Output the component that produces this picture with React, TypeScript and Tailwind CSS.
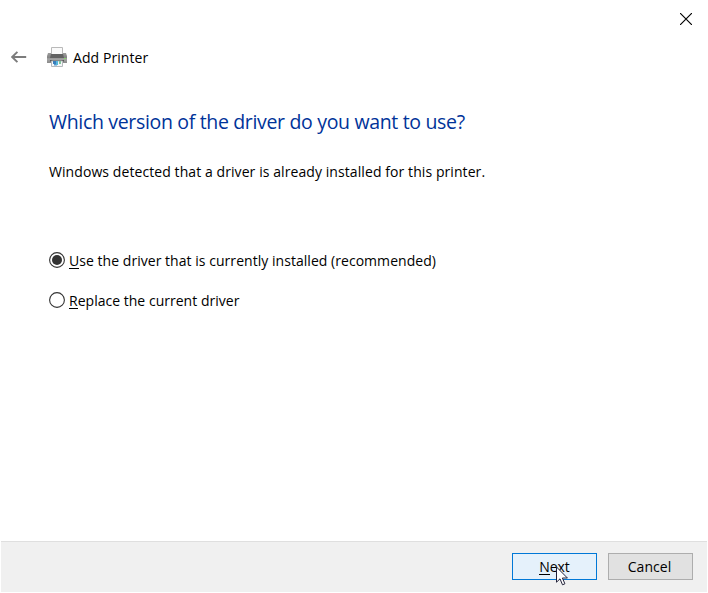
import type { ReactNode } from "react";

function BackArrow() {
  return (
    <svg width="16" height="12" viewBox="0 0 16 12" fill="none" stroke="#7c7c7c" strokeWidth="1.9">
      <path d="M15.2 6H1.3M6.4 .8 1.2 6l5.2 5.2" />
    </svg>
  );
}

function PrinterIcon() {
  return (
    <svg width="20" height="20" viewBox="0 0 20 20">
      <defs>
        <linearGradient id="body" x1="0" y1="0" x2="0" y2="1">
          <stop offset="0" stopColor="#9c9c9c" />
          <stop offset=".45" stopColor="#858585" />
          <stop offset=".6" stopColor="#a6a6a6" />
          <stop offset="1" stopColor="#8a8a8a" />
        </linearGradient>
      </defs>
      <path d="M4.5 8V.5h11V8" fill="#fafafa" stroke="#b9b9b9" />
      <path d="M1 6h3v1h12V6h3l1 3v7H0V9z" fill="url(#body)" />
      <path d="M4 7h12l1 4H3z" fill="#626262" />
      <path d="M17 11h2v1h-2z" fill="#86d66b" />
      <path d="M3 13h14v1.5H3z" fill="#555" />
      <path d="M4.5 14h11v5.5h-11z" fill="#f4f6f7" stroke="#b5b9bc" />
      <path d="M6 14h3v3H6z" fill="#3a7dbb" />
      <path d="M7 17h3v1.5H7z" fill="#5297cc" />
      <path d="M9 14h2v4H9z" fill="#54b6dc" />
      <path d="M12 14h2v3h-2z" fill="#83c59b" />
    </svg>
  );
}

function CloseIcon() {
  return (
    <svg width="12" height="12" viewBox="0 0 12 12" stroke="#000" strokeWidth="1.15">
      <path d="m0 0 12 12M12 0 0 12" />
    </svg>
  );
}

function Accel({ children }: { children: ReactNode }) {
  return <span className="inline-block h-[16px] border-b border-black leading-[16px]">{children}</span>;
}

function Radio({ checked }: { checked?: boolean }) {
  return (
    <svg width="16" height="16" viewBox="0 0 16 16" className="-mt-px shrink-0 self-start translate-y-[2px]">
      <circle cx="8" cy="8" r="7.4" fill="#fff" stroke="#333" strokeWidth="1.1" />
      {checked && <circle cx="8" cy="8" r="5" fill="#333" />}
    </svg>
  );
}

function Cursor() {
  return (
    <svg width="13" height="20" viewBox="0 0 13 20" className="absolute left-[43px] top-[12px]">
      <path d="M.5 1v15.2l3.5-3.4 2.5 6 2.4-1-2.5-5.8h5z" fill="#fff" stroke="#22223a" />
    </svg>
  );
}

export default function App() {
  return (
    <div className="flex h-[593px] w-[708px] flex-col bg-white px-px pb-px font-['Open_Sans','Noto_Sans',sans-serif] text-[14px] text-black">
      <header className="flex h-[38px] items-center justify-end pr-[15px]">
        <button aria-label="Close"><CloseIcon /></button>
      </header>
      <div className="flex h-[38px] items-center pl-[10px]">
        <button aria-label="Back"><BackArrow /></button>
        <span className="ml-[20px]"><PrinterIcon /></span>
        <span className="ml-[6px] whitespace-nowrap tracking-[0.08px]">Add Printer</span>
      </div>
      <main className="flex flex-1 flex-col items-start whitespace-nowrap pl-12 pt-[31px]">
        <h1 className="h-[30px] text-[19.5px] leading-[30px] tracking-[-0.33px] text-[#003399]">Which version of the driver do you want to use?</h1>
        <p className="mt-[25px] h-5 leading-5 tracking-[0.08px]">Windows detected that a driver is already installed for this printer.</p>
        <label className="mt-[69px] flex h-5 gap-1 leading-5">
          <Radio checked />
          <span className="tracking-[0.04px]"><Accel>U</Accel>se the driver that is currently installed (recommended)</span>
        </label>
        <label className="mt-5 flex h-5 gap-1 leading-5">
          <Radio />
          <span className="tracking-[0.02px]"><Accel>R</Accel>eplace the current driver</span>
        </label>
      </main>
      <footer className="flex h-[51px] items-start justify-end gap-[11px] border-t border-[#dfdfdf] bg-[#f0f0f0] pr-[14px] pt-[11px]">
        <button className="relative h-[27px] w-[85px] border border-[#0078d7] bg-[#e5f1fb] leading-[25px]">
          <Accel>N</Accel>ext
          <Cursor />
        </button>
        <button className="h-[27px] w-[85px] border border-[#adadad] bg-[#e1e1e1] pr-[2px] leading-[25px] tracking-[0.05px]">Cancel</button>
      </footer>
    </div>
  );
}
